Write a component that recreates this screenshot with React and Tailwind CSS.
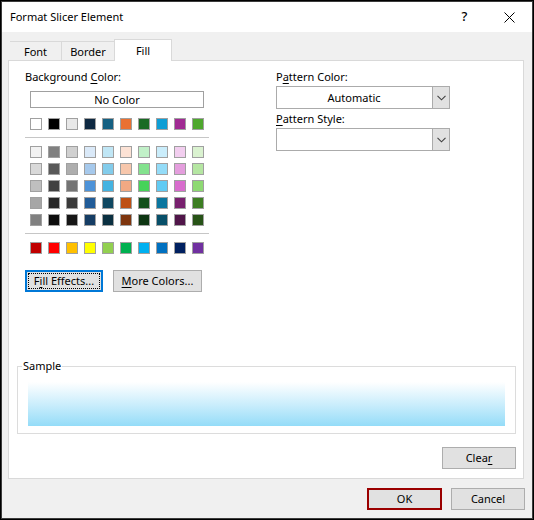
import { useState } from 'react';

const baseColors = ['#ffffff', '#000000', '#e8e8e8', '#0e2841', '#156082', '#e97132', '#196b24', '#0f9ed5', '#a02b93', '#4ea72e'];

const shadeColors = [
  '#f2f2f2', '#808080', '#d0d0d0', '#dae9f8', '#c0e6f5', '#fce2d5', '#c1f0c8', '#caedfb', '#f2ceef', '#daf2d0',
  '#d9d9d9', '#595959', '#aeaeae', '#a6c9ec', '#83cceb', '#f7c7ac', '#83e28e', '#94dcf8', '#e49edd', '#b5e6a2',
  '#bfbfbf', '#404040', '#747474', '#4d93d9', '#44b3e1', '#f1a983', '#47d359', '#61cbf3', '#d86dcd', '#8ed973',
  '#a6a6a6', '#262626', '#3a3a3a', '#215c98', '#104861', '#be5014', '#12501a', '#0b769f', '#78206e', '#3c7d22',
  '#808080', '#0d0d0d', '#161616', '#153d64', '#0b3041', '#7e350e', '#0d3512', '#074f69', '#501549', '#275317',
];

const standardColors = ['#c00000', '#ff0000', '#ffc000', '#ffff00', '#92d050', '#00b050', '#00b0f0', '#0070c0', '#002060', '#7030a0'];

function Swatches({ colors }) {
  return (
    <div className="mx-[5px] grid grid-cols-10 gap-x-[6px] gap-y-[5px]">
      {colors.map((color, i) => (
        <button key={i} type="button" aria-label={color} className="h-3 w-3 border border-[#a0a0a0]" style={{ background: color }} />
      ))}
    </div>
  );
}

function Key({ children }) {
  return <span className="underline underline-offset-2">{children}</span>;
}

function DropDown({ id, label, options }) {
  return (
    <div>
      <label htmlFor={id} className="block h-4 leading-4">{label}</label>
      <div className="relative mt-px h-[23px]">
        <select id={id} className="h-full w-full appearance-none border border-[#ababab] bg-white pr-[18px] leading-4 [text-align-last:center]">
          {options.map(o => <option key={o}>{o}</option>)}
        </select>
        <span className="pointer-events-none absolute inset-y-0 right-0 flex w-[18px] items-center justify-center border border-[#ababab] bg-[#e1e1e1]">
          <svg width="9" height="6" viewBox="0 0 9 6" fill="none" stroke="#404040" strokeWidth="1.1">
            <path d="M0.5 0.8 4.5 4.8 8.5 0.8" />
          </svg>
        </span>
      </div>
    </div>
  );
}

const tabs = ['Font', 'Border', 'Fill'];
const button = 'h-[22px] border border-[#adadad] bg-[#e1e1e1] leading-4 text-center';

export default function App() {
  const [tab, setTab] = useState('Fill');

  return (
    <div className="min-h-screen border border-black bg-[#f0f0f0] font-['Noto_Sans','Open_Sans',sans-serif] text-[11px] text-black">
      <div className="flex min-h-[calc(100vh-2px)] flex-col border border-[#3c3c3c]">
        <header className="flex h-[30px] items-center bg-white pl-2">
          <h1 className="grow leading-4">Format Slicer Element</h1>
          <button type="button" aria-label="Help" className="flex h-full w-[45px] items-center justify-center text-[13px] font-medium">?</button>
          <button type="button" aria-label="Close" className="flex h-full w-[45px] items-center justify-center">
            <svg width="11" height="11" viewBox="0 0 11 11" stroke="#000" strokeWidth="1">
              <path d="M0.5 0.5 10.5 10.5M10.5 0.5 0.5 10.5" />
            </svg>
          </button>
        </header>

        <div role="tablist" className="mt-[7px] flex items-end pl-2">
          {tabs.map(t => (
            <button
              key={t}
              type="button"
              role="tab"
              aria-selected={t === tab}
              onClick={() => setTab(t)}
              className={t === tab
                ? 'relative -mb-px h-[22px] w-[58px] border border-b-0 border-[#d9d9d9] bg-white leading-4'
                : 'h-[19px] w-[52px] border-t border-r border-[#d9d9d9] pt-px leading-4 last:border-r-0 nth-2:border-r-0'}
            >
              {t}
            </button>
          ))}
        </div>

        <main role="tabpanel" className="mr-2 ml-[6px] grow border border-[#d9d9d9] bg-white px-[7px] pt-2 pb-[9px]">
          <div className="flex gap-[67px] pl-[9px]">
            <section className="w-[184px]">
              <h2 className="h-4 leading-4">Background <Key>C</Key>olor:</h2>
              <div className="mx-[5px] mt-[6px] mb-[10px]">
                <button type="button" className="block h-[17px] w-full border border-[#a0a0a0] bg-white leading-[15px]">No Color</button>
              </div>
              <Swatches colors={baseColors} />
              <hr className="mt-[7px] mb-2 border-[#c6c6c6]" />
              <Swatches colors={shadeColors} />
              <hr className="mt-[7px] mb-2 border-[#c6c6c6]" />
              <Swatches colors={standardColors} />
              <div className="mt-4 flex gap-[10px]">
                <button type="button" className="h-[22px] w-[78px] border-2 border-[#0078d7] bg-[#e1e1e1] p-px">
                  <span className="flex h-full items-center justify-center border border-dotted border-black whitespace-nowrap">
                    <span>F<Key>i</Key>ll Effects...</span>
                  </span>
                </button>
                <button type="button" className={`${button} w-[89px]`}><Key>M</Key>ore Colors...</button>
              </div>
            </section>

            <section className="flex w-[174px] flex-col gap-[2px]">
              <DropDown id="pattern-color" label={<>P<Key>a</Key>ttern Color:</>} options={['Automatic']} />
              <DropDown id="pattern-style" label={<><Key>P</Key>attern Style:</>} options={['']} />
            </section>
          </div>

          <fieldset className="mt-[66px] ml-px border border-[#dcdcdc] px-[10px] pb-[7px]">
            <legend className="-ml-[6px] h-4 px-px leading-4">Sample</legend>
            <div className="mt-2 h-11 bg-linear-to-b from-white to-[#94dcf8]" />
          </fieldset>

          <div className="mt-[13px] flex justify-end">
            <button type="button" className={`${button} w-[74px]`}>Clea<Key>r</Key></button>
          </div>
        </main>

        <footer className="flex justify-end gap-[9px] pt-[9px] pr-[7px] pb-2">
          <button type="button" className="h-[22px] w-[75px] border-2 border-[#9b0000] bg-[#e1e1e1] leading-4">OK</button>
          <button type="button" className={`${button} w-[74px]`}>Cancel</button>
        </footer>
      </div>
    </div>
  );
}
